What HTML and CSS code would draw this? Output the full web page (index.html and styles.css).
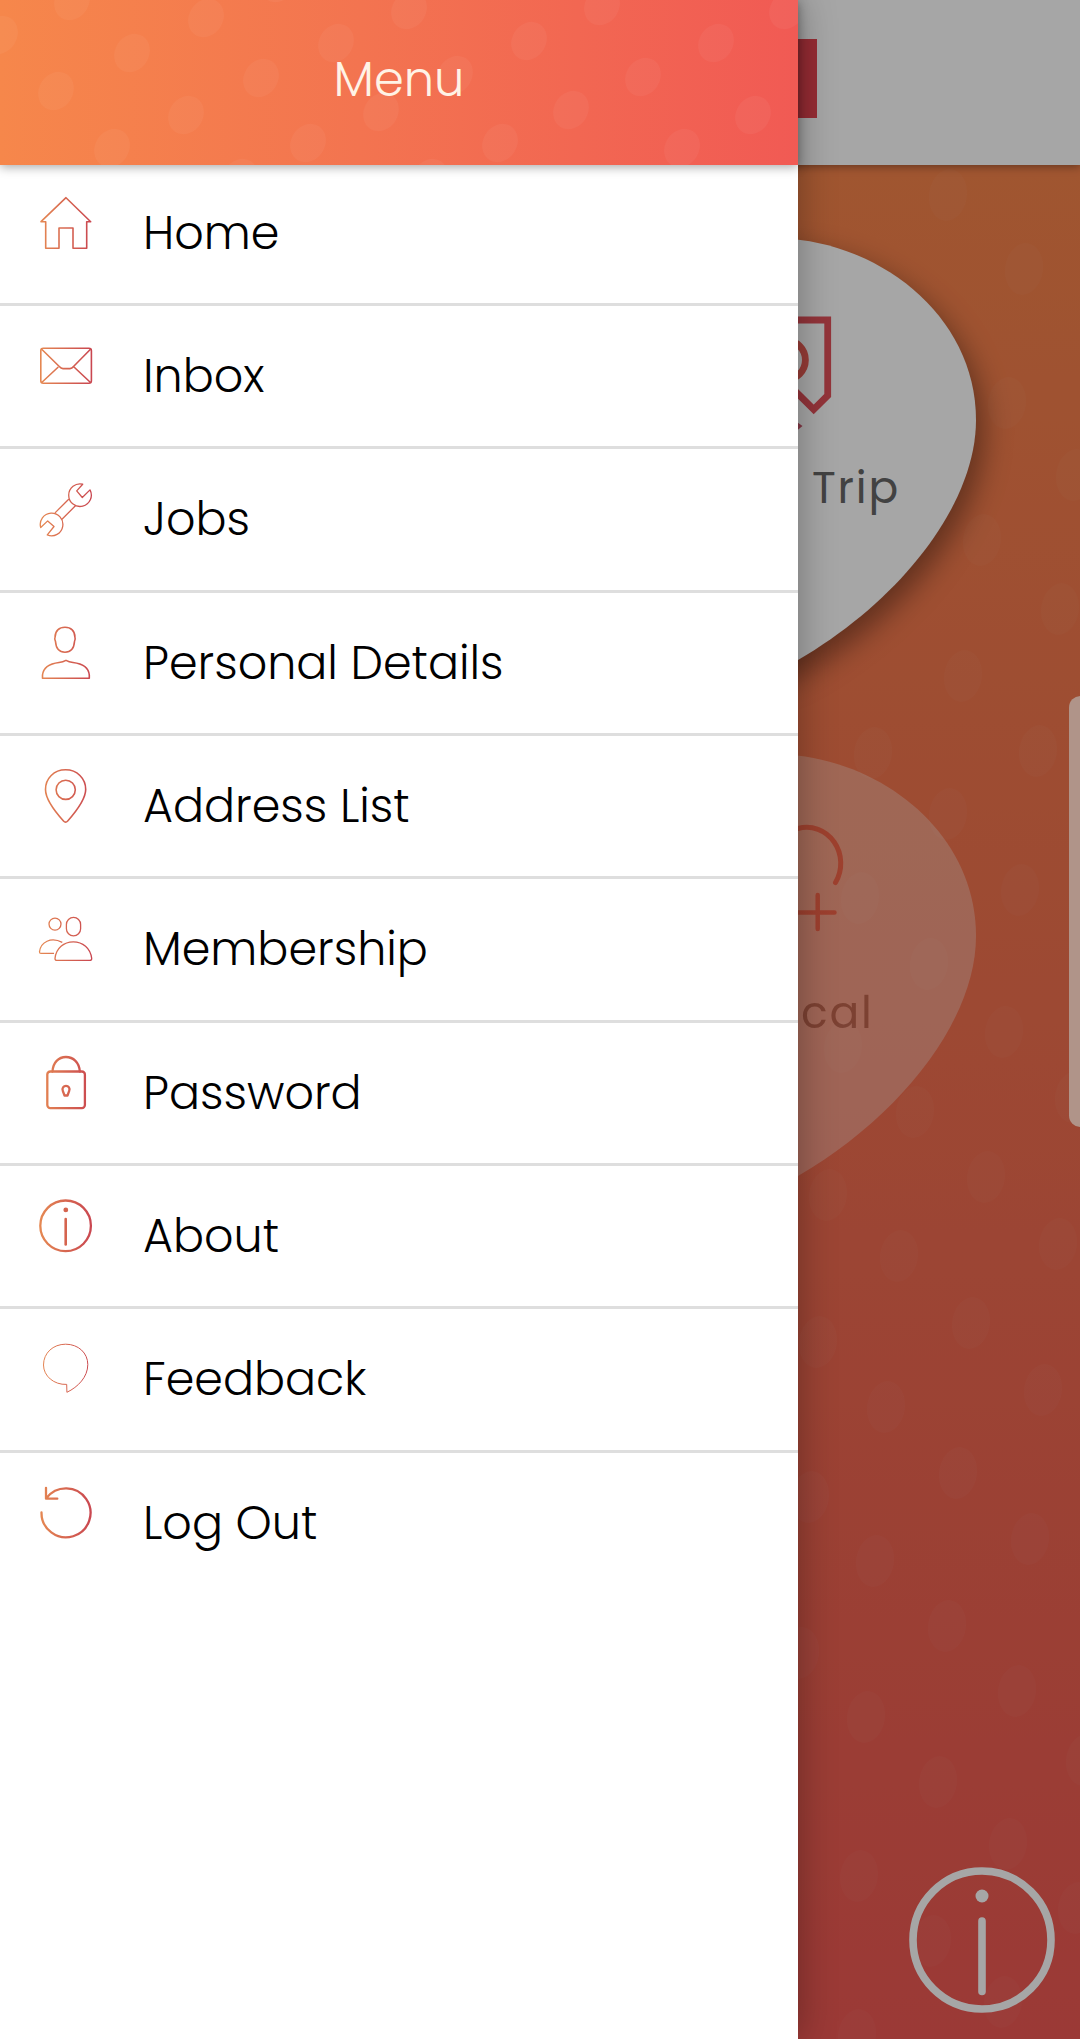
FILE: index.html
```html
<!DOCTYPE html>
<html lang="en">
<head>
<meta charset="utf-8">
<title>Menu</title>
<link rel="stylesheet" href="styles.css">
</head>
<body>
<div class="screen">
  <main class="home">
    <header class="home-bar"><span class="brand"></span></header>
    <div class="home-body">
      <svg class="dots" viewBox="0 165 1080 1874" aria-hidden="true">
        <defs><ellipse id="dot" rx="19" ry="26" transform="rotate(8)"/></defs>
        <g fill="#fff" fill-opacity=".032">
          <use href="#dot" x="948" y="195"/><use href="#dot" x="1024" y="269"/><use href="#dot" x="1007" y="403"/><use href="#dot" x="1075" y="475"/>
          <use href="#dot" x="982" y="540"/><use href="#dot" x="1060" y="609"/><use href="#dot" x="963" y="676"/><use href="#dot" x="873" y="753"/>
          <use href="#dot" x="1038" y="751"/><use href="#dot" x="948" y="814"/><use href="#dot" x="1020" y="890"/><use href="#dot" x="860" y="898"/>
          <use href="#dot" x="929" y="964"/><use href="#dot" x="1004" y="1032"/><use href="#dot" x="843" y="1047"/><use href="#dot" x="1074" y="1097"/>
          <use href="#dot" x="915" y="1112"/><use href="#dot" x="986" y="1177"/><use href="#dot" x="828" y="1195"/><use href="#dot" x="1058" y="1244"/>
          <use href="#dot" x="899" y="1256"/><use href="#dot" x="971" y="1323"/><use href="#dot" x="818" y="1342"/><use href="#dot" x="1043" y="1390"/>
          <use href="#dot" x="886" y="1407"/><use href="#dot" x="958" y="1473"/><use href="#dot" x="810" y="1497"/><use href="#dot" x="1030" y="1539"/>
          <use href="#dot" x="875" y="1561"/><use href="#dot" x="947" y="1626"/><use href="#dot" x="800" y="1653"/><use href="#dot" x="1017" y="1691"/>
          <use href="#dot" x="866" y="1717"/><use href="#dot" x="938" y="1782"/><use href="#dot" x="1085" y="1760"/><use href="#dot" x="1008" y="1844"/>
          <use href="#dot" x="859" y="1876"/><use href="#dot" x="1077" y="1908"/><use href="#dot" x="932" y="1941"/><use href="#dot" x="1003" y="2002"/>
          <use href="#dot" x="857" y="2035"/>
        </g>
      </svg>
      <div class="tiles">
        <div class="tile tile-trip">
          <svg class="tile-art" viewBox="0 0 400 440" aria-hidden="true">
            <path class="leaf" d="M196-1C300-1 400 75 400 181C400 265 325 361 222 421L196 434C90 380 0 280 0 181C0 75 92-1 196-1Z"/>
            <g fill="none" stroke="#e2505a" stroke-width="6.8">
              <path d="M160 81H251.700V156.500L237.700 170.500L205 138"/>
              <circle cx="209.600" cy="121" r="19.800" stroke="#e85c53"/>
            </g>
            <path d="M218 181L226.500 187L218 194Z" fill="#c9566a"/>
          </svg>
          <span class="tile-label">Trip</span>
        </div>
        <div class="tile tile-medical">
          <svg class="tile-art" viewBox="0 0 400 440" aria-hidden="true">
            <path class="leaf" d="M196-1C300-1 400 75 400 181C400 265 325 361 222 421L196 434C90 380 0 280 0 181C0 75 92-1 196-1Z"/>
            <g fill="none" stroke="#f0403c" stroke-width="5" stroke-linecap="round">
              <path d="M222 73.500A34 36 0 0 1 259.500 127.500"/>
              <path d="M241.700 140V174M205 157.500H258.500" stroke-width="4.500"/>
            </g>
          </svg>
          <span class="tile-label">cal</span>
        </div>
      </div>
      <svg class="info" viewBox="0 0 148 148" fill="none" stroke="#fff" stroke-width="7.600" stroke-linecap="round" aria-label="Information">
        <circle cx="74" cy="74" r="69"/>
        <path d="M74 55V125.500"/>
        <circle cx="74" cy="30" r="6.500" fill="#fff" stroke="none"/>
      </svg>
    </div>
  </main>

  <div class="backdrop"></div>
  <div class="edge-handle"></div>

  <aside class="drawer">
    <header class="drawer-bar">
      <svg class="drawer-dots" viewBox="0 0 798 165" aria-hidden="true">
        <defs><ellipse id="spot" rx="17" ry="20" transform="rotate(32)"/></defs>
        <g fill="#fff" fill-opacity=".042">
          <use href="#spot" x="72" y="1"/><use href="#spot" x="206" y="18"/><use href="#spot" x="0" y="35"/><use href="#spot" x="132" y="53"/>
          <use href="#spot" x="56" y="91"/><use href="#spot" x="186" y="115"/><use href="#spot" x="112" y="148"/><use href="#spot" x="261" y="78"/>
          <use href="#spot" x="336" y="43"/><use href="#spot" x="308" y="143"/><use href="#spot" x="409" y="10"/><use href="#spot" x="381" y="112"/>
          <use href="#spot" x="455" y="75"/><use href="#spot" x="500" y="143"/><use href="#spot" x="529" y="41"/><use href="#spot" x="571" y="110"/>
          <use href="#spot" x="602" y="6"/><use href="#spot" x="643" y="77"/><use href="#spot" x="682" y="148"/><use href="#spot" x="716" y="43"/>
          <use href="#spot" x="753" y="115"/><use href="#spot" x="787" y="10"/><use href="#spot" x="240" y="178"/><use href="#spot" x="430" y="178"/>
          <use href="#spot" x="278" y="-17"/>
        </g>
      </svg>
      <h1 class="drawer-title">Menu</h1>
    </header>

    <svg class="defs" width="0" height="0" aria-hidden="true">
      <linearGradient id="warm" gradientUnits="userSpaceOnUse" x1="4" y1="0" x2="56" y2="0">
        <stop offset="0" stop-color="#e58852"/><stop offset="1" stop-color="#c94650"/>
      </linearGradient>
    </svg>

    <nav class="menu">
      <a class="item item-home">
        <svg class="icon" viewBox="0 0 60 60"><path d="M30 4.700L5 28.700H9.700V55.300H23V35H37V55.300H50.700V28.700H54.700Z"/></svg>
        <span class="label">Home</span>
      </a>
      <a class="item">
        <svg class="icon" viewBox="0 0 60 60"><rect x="4.800" y="12.300" width="50.600" height="35" rx="2.500"/><path d="M5.700 13.300L23.300 30.500Q25 32.600 27 32.600H34Q36 32.600 37.500 30.500L54.500 13.300M5.700 46.500L22.300 31M54.500 46.500L38 31"/></svg>
        <span class="label">Inbox</span>
      </a>
      <a class="item">
        <svg class="icon thin" viewBox="0 0 60 60"><path d="M46.700 5.200L40.700 11.900L46.300 18.500L54 10.900A11.300 11.300 0 1 1 46.700 5.200ZM4.700 48.500L11.700 41.900L18 47.500L11.300 55.900A11.300 11.300 0 1 0 4.700 48.500ZM19 33.900L32.700 20.200M26 40.200L39.700 26.500"/></svg>
        <span class="label">Jobs</span>
      </a>
      <a class="item">
        <svg class="icon" viewBox="0 0 60 60"><path d="M29 4.200C35 4.200 38.900 8 38.900 14C39.300 15 39.200 17 38.500 18.500C38 25.500 34.500 29.200 29 29.200S20 25.500 19.500 18.500C18.700 17 18.600 15 19.100 14C19.100 8 23 4.200 29 4.200ZM6.500 55.200V52C7.500 43.500 15 40.500 23 39.500Q27 39 30 37.400Q33 39 37 39.500C45 40.500 52.500 43.500 53.300 52V55.200Z"/></svg>
        <span class="label">Personal Details</span>
      </a>
      <a class="item">
        <svg class="icon" viewBox="0 0 60 60"><path d="M29.600 3.800C18 3.800 9.500 12.500 9.500 23.500C9.500 33 18.500 45 27.500 55Q29.600 57.300 31.700 55C40.500 45 49.700 33 49.700 23.500C49.700 12.500 41 3.800 29.600 3.800Z"/><circle cx="29.700" cy="23.800" r="9.600"/></svg>
        <span class="label">Address List</span>
      </a>
      <a class="item">
        <svg class="icon thin" viewBox="0 0 60 60"><circle cx="19" cy="15.100" r="6"/><rect x="30.400" y="8.400" width="14.200" height="18.400" rx="7.100"/><path d="M21 51.400Q19 51.400 19 49.400C20 39 28 32.800 37.300 32.800S54.500 39 55.700 49.400Q55.700 51.400 53.700 51.400ZM26.300 33.400C15 27.500 4.500 33 3.500 42.900Q3.500 44.400 5 44.400H18"/></svg>
        <span class="label">Membership</span>
      </a>
      <a class="item">
        <svg class="icon bold" viewBox="0 0 60 60"><rect x="11.300" y="18.500" width="37.600" height="36.600" rx="3"/><path d="M16.500 18.500C17 9.500 22.500 4 29.900 4S43.300 9.500 43.800 18.500M28.500 42.500L26.800 37.800A3.500 3.500 0 1 1 33.200 37.800L31.500 42.500Z"/></svg>
        <span class="label">Password</span>
      </a>
      <a class="item item-about">
        <svg class="icon bold" viewBox="0 0 60 60"><circle cx="29.600" cy="29.800" r="25.300"/><path d="M29.700 23V48.500" stroke-width="2.600"/><circle class="solid" cx="29.800" cy="13.900" r="2.400"/></svg>
        <span class="label">About</span>
      </a>
      <a class="item">
        <svg class="icon hair" viewBox="0 0 60 60"><path d="M30.700 45.400C18 46 7.500 37 7.500 26C7.500 14 17 5.200 29.700 5.200S51.800 14 51.800 25.500C51.800 38 42 48 30.900 53.300Z"/></svg>
        <span class="label">Feedback</span>
      </a>
      <a class="item">
        <svg class="icon bold" viewBox="0 0 60 60"><path d="M5.500 29.500A24.500 24.500 0 1 0 10.500 15M10 4.800V15.700H21.300"/></svg>
        <span class="label">Log Out</span>
      </a>
    </nav>
  </aside>
</div>
</body>
</html>
```
FILE: styles.css
```css
* {
  box-sizing: border-box;
}

body {
  margin: 0;
  font-family: Poppins, Inter, "Liberation Sans", sans-serif;
  font-weight: 300;
  color: #000;
}

.screen {
  position: relative;
  height: 2039px;
  overflow: hidden;
}

/* Home screen behind the drawer */
.home {
  display: flex;
  flex-direction: column;
  height: 100%;
}

.home-bar {
  display: flex;
  justify-content: center;
  height: 165px;
  padding-top: 39px;
  background: #fff;
  box-shadow: 0 2px 8px rgba(0, 0, 0, .35);
  z-index: 1;
}

.brand {
  width: 554px;
  height: 79px;
  background: #e64450;
}

.home-body {
  position: relative;
  flex: 1;
  display: flex;
  flex-direction: column;
  justify-content: space-between;
  align-items: flex-end;
  padding: 74px 24px 25px 0;
  background: linear-gradient(#f6844b, #f06b50 57%, #ee5853);
}

.dots {
  position: absolute;
  inset: 0;
}

.tiles {
  display: grid;
  gap: 76px;
  margin-right: 80px;
}

.tile {
  position: relative;
  display: flex;
  align-items: flex-end;
  width: 400px;
  height: 440px;
}

.tile-art {
  position: absolute;
  inset: 0;
  overflow: visible;
}

.tile-art .leaf {
  fill: #fff;
}

.tile-trip .leaf {
  filter: drop-shadow(8px 12px 14px rgba(0, 0, 0, .38));
}

.tile-medical {
  opacity: .3;
}

.tile-label {
  position: relative;
  font-size: 44px;
  font-weight: 400;
  line-height: 54px;
}

.tile-trip .tile-label {
  padding: 0 0 164px 236px;
  letter-spacing: 1.8px;
  color: #666;
}

.tile-medical .tile-label {
  padding: 0 0 155px 225px;
  letter-spacing: 1.8px;
  color: #4e4e4e;
}

.info {
  position: relative;
  width: 148px;
  height: 148px;
}

.backdrop {
  position: absolute;
  inset: 0;
  background: rgba(0, 0, 0, .35);
  z-index: 2;
}

.edge-handle {
  position: absolute;
  top: 696px;
  right: -12px;
  width: 23px;
  height: 431px;
  border-radius: 12px;
  background: #b09489;
  z-index: 2;
}

/* Drawer */
.drawer {
  position: absolute;
  inset: 0 auto 0 0;
  width: 798px;
  background: #fff;
  box-shadow: 0 0 36px rgba(0, 0, 0, .32);
  z-index: 3;
}

.drawer-bar {
  position: relative;
  display: flex;
  align-items: center;
  justify-content: center;
  height: 165px;
  padding-bottom: 5px;
  background: linear-gradient(90deg, #f6874b, #f37450 45%, #f15a54);
  box-shadow: 0 2px 10px rgba(0, 0, 0, .35);
}

.drawer-dots {
  position: absolute;
  inset: 0;
}

.drawer-title {
  position: relative;
  margin: 0;
  font-size: 48px;
  font-weight: 300;
  line-height: 56px;
  color: #fff3e6;
}

.defs {
  display: block;
}

.menu {
  display: grid;
  grid-template-rows: 141px;
  grid-auto-rows: 143.34px;
}

.item {
  display: flex;
  align-items: center;
  gap: 47px;
  padding-left: 36px;
  border-bottom: 3px solid #dedede;
}

.item:last-child {
  border-bottom-color: transparent;
}

.item-home {
  padding-bottom: 2px;
}

.icon {
  align-self: flex-start;
  width: 60px;
  height: 60px;
  margin-top: 30px;
  fill: none;
  stroke: url(#warm);
  stroke-width: 1.6;
  stroke-linejoin: round;
}

.item-home .icon {
  margin-top: 28px;
}

.icon.thin {
  stroke-width: 1.3;
}

.icon.hair {
  stroke-width: 1;
}

.icon.bold {
  stroke-width: 2.3;
  stroke-linecap: round;
}

.icon .solid {
  fill: #d5644f;
  stroke: none;
}

.item-about path {
  stroke: #d5644f;
}

.label {
  font-size: 46px;
  line-height: 56px;
}
```
